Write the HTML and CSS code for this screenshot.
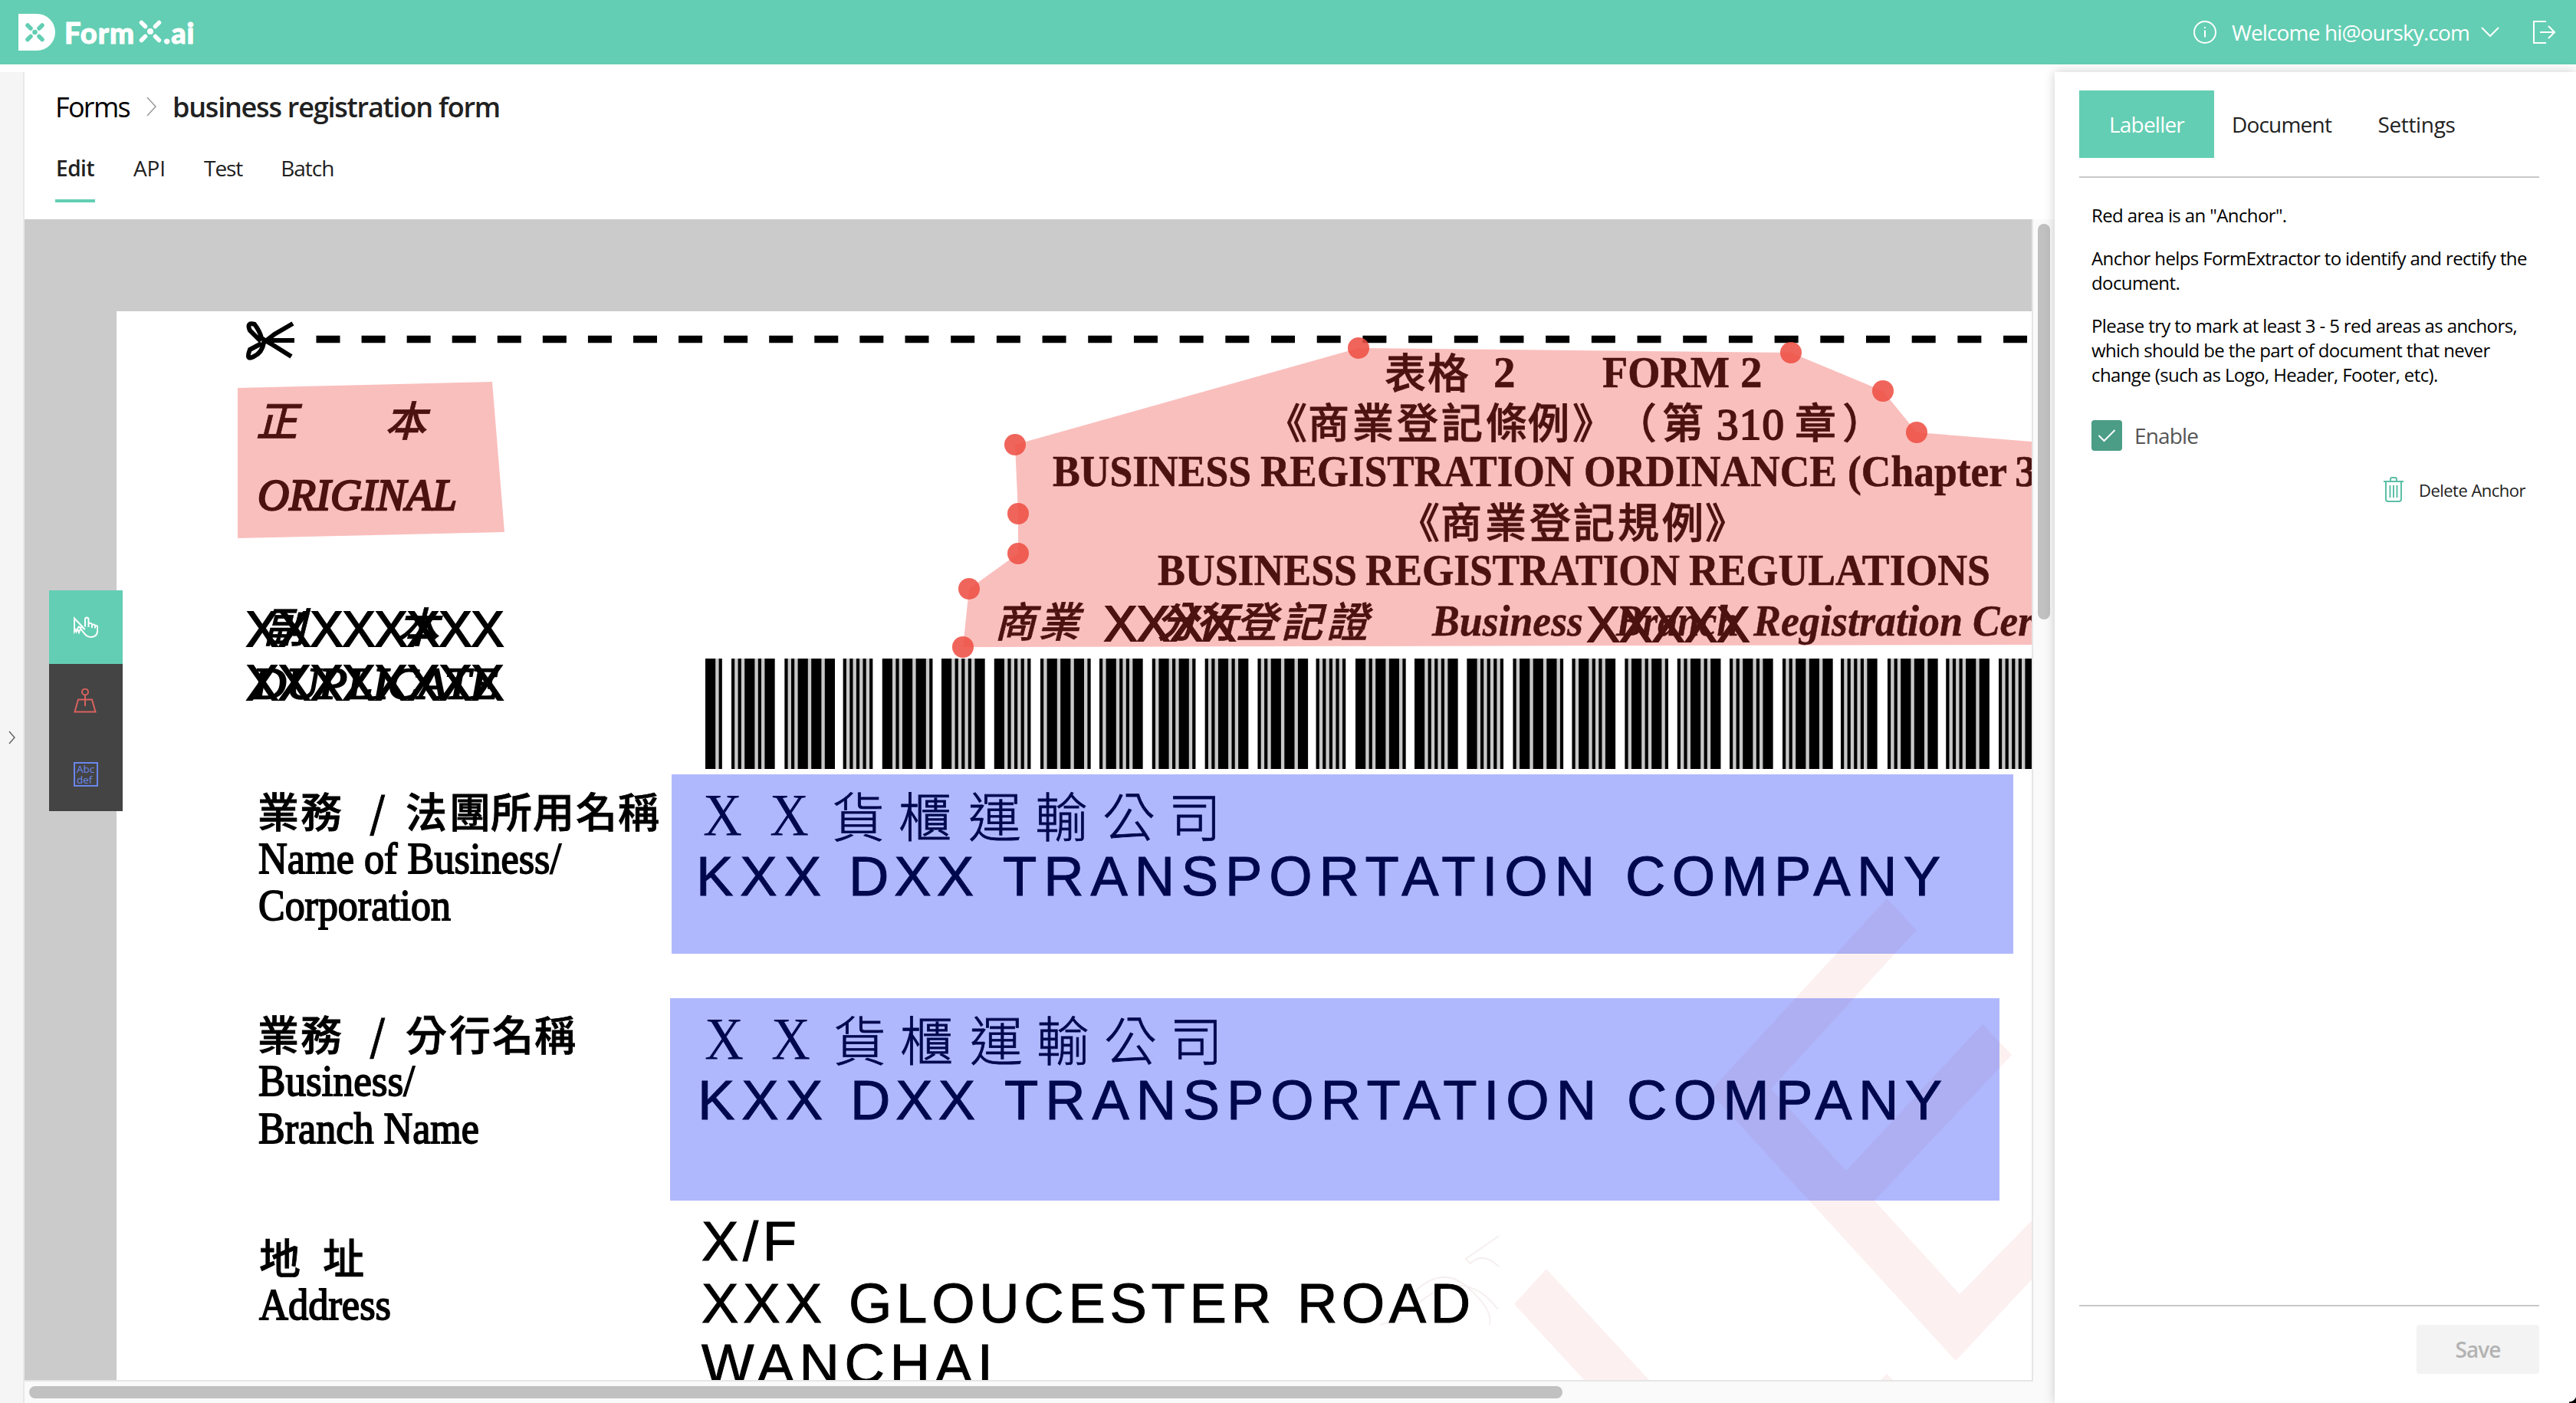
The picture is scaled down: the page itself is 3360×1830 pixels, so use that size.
FILE: index.html
```html
<!DOCTYPE html>
<html lang="en">
<head>
<meta charset="utf-8">
<title>FormX.ai</title>
<link rel="stylesheet" href="styles.css">
</head>
<body>
<header class="topbar">
  <div class="brand">
    <svg class="brand-mark" viewBox="0 0 48 48"><path d="M0 0H24A24 24 0 0 1 24 48H0Z" fill="#fff"/><g stroke="#63ceb3" stroke-width="5.500" stroke-linecap="round"><path d="M12 15l4 4M31 15l-4 4M12 33.500l4-4M31 33.500l-4-4"/></g><circle cx="21.500" cy="24" r="3.300" fill="#63ceb3"/></svg>
    <span class="brand-text">Form</span>
    <svg class="brand-x" viewBox="0 0 30 30"><g stroke="#fff" stroke-width="5.500" stroke-linecap="round"><path d="M3.500 3.500l5 5M26.500 3.500l-5 5M3.500 26.500l5-5M26.500 26.500l-5-5"/></g><circle cx="15" cy="15" r="4" fill="#fff"/></svg>
    <span class="brand-text brand-ai">.ai</span>
  </div>
  <div class="account">
    <svg class="i-info" viewBox="0 0 30 30"><circle cx="15" cy="15" r="14" /><path d="M15 12.500v9M15 8v2"/></svg>
    <span class="welcome">Welcome hi@oursky.com</span>
    <svg class="i-down" viewBox="0 0 24 14"><path d="M1 1l11 11L23 1"/></svg>
    <svg class="i-exit" viewBox="0 0 30 30"><path d="M17 1H1v28h16M9 15h19M20 7l8 8-8 8"/></svg>
  </div>
</header>
<div class="shell">
  <aside class="rail"><svg viewBox="0 0 10 18"><path d="M1 1l7 8-7 8"/></svg></aside>
  <main class="work">
    <div class="crumbs">
      <span class="crumb">Forms</span>
      <svg viewBox="0 0 14 26"><path d="M1 1l11 12L1 25"/></svg>
      <span class="crumb current">business registration form</span>
    </div>
    <nav class="tabs"><a class="tab active">Edit</a><a class="tab api">API</a><a class="tab">Test</a><a class="tab">Batch</a></nav>
    <div class="stage">
      <div class="canvas">
        <svg class="doc" viewBox="32 286 2618 1514">
          <rect x="152" y="406" width="2500" height="1400" fill="#fff"/>
          <g class="watermark">
            <path d="M2461 1172L2500 1213 2310 1420 2408 1527 2586 1336 2624 1376 2445 1566 2556 1688 2651 1591V1668L2551 1775 2230 1424Z"/>
            <path d="M2017 1655L1975 1701 2067 1801H2152ZM2461 1792l-9 9h18Z"/>
          </g>
          <g class="scribble"><path d="M1955 1612L1912 1642l6 6q16-16 37 4M1838 1692q40-44 75-14t30 50M1850 1700q60-50 104 8M1800 1728l28-8"/></g>
          <g class="scissors"><path d="M340 445L326 431Q321 420 332 423 339 432 341 441L356 450 380 465M341 448L326 456Q320 471 331 465 342 460 344 447L358 436 382 422" /><path d="M350 444h34" /></g>
          <path class="cut" d="M412.500 442.500H1170" stroke-dasharray="31 28.070"/>
          <path class="cut" d="M1180.500 442.500H2651" stroke-dasharray="31 28.690"/>
          <g class="cjk slant"><text transform="translate(334 569) skewX(-14)">正</text><text transform="translate(502 569) skewX(-14)">本</text></g>
          <text class="serif it" x="336" y="665" textLength="260" lengthAdjust="spacingAndGlyphs">ORIGINAL</text>
          <g class="cjk slant"><text transform="translate(344 838) skewX(-14)">副</text><text transform="translate(518 838) skewX(-14)">本</text></g>
          <text class="strike" x="321" y="843" textLength="336" lengthAdjust="spacingAndGlyphs">XXXXXXXX</text>
          <text class="serif it" x="330" y="911" textLength="320" lengthAdjust="spacingAndGlyphs">DUPLICATE</text>
          <text class="strike" x="321" y="913" textLength="336" lengthAdjust="spacingAndGlyphs">XXXXXXXX</text>
          <g id="barcode" class="barcode"></g>
          <g class="cjk">
            <text x="1806 1862" y="507">表格</text>
            <text x="1651 1706 1764 1822 1880 1938 1993 2051" y="572">《商業登記條例》</text>
            <text x="2107 2168" y="572">（第</text><text x="2341 2403" y="572">章）</text>
            <text x="1824 1879 1937 1995 2052 2110 2168 2224" y="702">《商業登記規例》</text>
          </g>
          <g class="serif b">
            <text x="1948" y="505">2</text>
            <text x="2090" y="505" textLength="166" lengthAdjust="spacingAndGlyphs">FORM</text><text x="2270" y="505">2</text>
            <text class="n" x="2239" y="573" textLength="88" lengthAdjust="spacing">310</text>
            <text x="1373" y="634" textLength="259" lengthAdjust="spacingAndGlyphs">BUSINESS</text>
            <text x="1644" y="634" textLength="409" lengthAdjust="spacingAndGlyphs">REGISTRATION</text>
            <text x="2066" y="634" textLength="330" lengthAdjust="spacingAndGlyphs">ORDINANCE</text>
            <text x="2410" y="634" textLength="208" lengthAdjust="spacingAndGlyphs">(Chapter</text>
            <text x="2628" y="634">3</text>
            <text x="1510" y="763" textLength="260" lengthAdjust="spacingAndGlyphs">BUSINESS</text>
            <text x="1781" y="763" textLength="410" lengthAdjust="spacingAndGlyphs">REGISTRATION</text>
            <text x="2203" y="763" textLength="393" lengthAdjust="spacingAndGlyphs">REGULATIONS</text>
          </g>
          <g class="cjk slant">
            <text transform="translate(1297 831) skewX(-14)" x="0 57">商業</text>
            <text transform="translate(1508 831) skewX(-14)" x="0 52 104 163 222">分行登記證</text>
          </g>
          <text class="strike" x="1440" y="836" textLength="172" lengthAdjust="spacingAndGlyphs">XXXX</text>
          <g class="serif it b">
            <text x="1868" y="829" textLength="197" lengthAdjust="spacingAndGlyphs">Business</text>
            <text x="2108" y="829" textLength="160" lengthAdjust="spacingAndGlyphs">Branch</text>
            <text x="2287" y="829" textLength="273" lengthAdjust="spacingAndGlyphs">Registration</text>
            <text x="2573" y="829" textLength="80" lengthAdjust="spacingAndGlyphs">Cer</text>
          </g>
          <text class="strike" x="2070" y="837" textLength="212" lengthAdjust="spacingAndGlyphs">XXXXX</text>
          <g class="cjk">
            <text x="336 392" y="1080">業務</text><text x="482" y="1080">/</text><text x="529 586 640 695 751 806" y="1080">法團所用名稱</text>
            <text x="336 392" y="1371">業務</text><text x="482" y="1371">/</text><text x="529 586 642 697" y="1371">分行名稱</text>
            <text x="338 421" y="1662">地址</text>
          </g>
          <g class="serif m">
            <text x="337" y="1139" textLength="395" lengthAdjust="spacingAndGlyphs">Name of Business/</text>
            <text x="337" y="1200" textLength="251" lengthAdjust="spacingAndGlyphs">Corporation</text>
            <text x="337" y="1429" textLength="204" lengthAdjust="spacingAndGlyphs">Business/</text>
            <text x="337" y="1491" textLength="288" lengthAdjust="spacingAndGlyphs">Branch Name</text>
            <text x="338" y="1721" textLength="172" lengthAdjust="spacingAndGlyphs">Address</text>
          </g>
          <g id="value">
            <text class="fine" x="917" y="1089" textLength="51" lengthAdjust="spacingAndGlyphs">X</text><text class="fine" x="1004" y="1089" textLength="51" lengthAdjust="spacingAndGlyphs">X</text>
            <text class="ming" x="1085 1172 1263 1350 1438 1524" y="1092">貨櫃運輸公司</text>
            <g class="sans">
              <text x="908" y="1168" textLength="163">KXX</text><text x="1107" y="1168" textLength="163">DXX</text>
              <text x="1308" y="1168" textLength="772">TRANSPORTATION</text><text x="2120" y="1168" textLength="411">COMPANY</text>
            </g>
          </g>
          <use href="#value" x="2" y="291.500"/>
          <g class="sans">
            <text x="915" y="1644" textLength="124">X/F</text>
            <text x="915" y="1725" textLength="157">XXX</text><text x="1107" y="1725" textLength="551">GLOUCESTER</text><text x="1692" y="1725" textLength="226">ROAD</text>
            <text x="915" y="1804" textLength="380">WANCHAI</text>
          </g>
          <g class="anchor-area">
            <path d="M310 506L642 498 658 694 310 702Z"/>
            <path d="M1256 844L1264 768 1328 722V670L1324 580 1772 454 2336 460 2456 510 2500 564 2651 576V841Z"/>
          </g>
          <g class="field-area"><rect x="876" y="1010" width="1750" height="234"/><rect x="874" y="1302" width="1734" height="264"/></g>
          <g class="handles"><circle cx="1256" cy="844" r="14"/><circle cx="1264" cy="768" r="14"/><circle cx="1328" cy="722" r="14"/><circle cx="1328" cy="670" r="14"/><circle cx="1324" cy="580" r="14"/><circle cx="1772" cy="454" r="14"/><circle cx="2336" cy="460" r="14"/><circle cx="2456" cy="510" r="14"/><circle cx="2500" cy="564" r="14"/></g>
        </svg>
      </div>
      <div class="vbar"><i></i></div>
      <div class="hbar"><i></i></div>
      <div class="tools">
        <button class="tool on"><svg viewBox="0 0 32 32"><path d="M9 17l-2-1.500L5 18l-1.500 4-1-2.500L1 22V4.500L13 17"/><path d="M5 18l2 5 1.500-4"/><path d="M15 15.500V6q0-2.500 2.200-2.500T19.500 6v6q0-1.500 2-1.200T24 12.500q4-.5 4 1.500 3-.5 3.200 1.500V20q0 8.500-8.200 9-6 0-9.500-5.500L9 18q-.5-2.500 2-2l4 3M19.500 12v4M24 12.500V17M28 14v3.500"/></svg></button>
        <button class="tool red"><svg viewBox="0 0 32 32"><circle cx="15" cy="4.500" r="4"/><path d="M15 9v14M6 14.500h18l4.500 16h-27z"/></svg></button>
        <button class="tool blue"><svg viewBox="0 0 32 32"><rect x="1" y="1" width="30" height="30"/><text x="4" y="14">Abc</text><text x="4" y="27.500">def</text></svg></button>
      </div>
    </div>
  </main>
  <section class="panel">
    <nav class="ptabs"><a class="ptab on">Labeller</a><a class="ptab">Document</a><a class="ptab last">Settings</a></nav>
    <div class="help">
      <p>Red area is an "Anchor".</p>
      <p>Anchor helps FormExtractor to identify and rectify the<br>document.</p>
      <p>Please try to mark at least 3 - 5 red areas as anchors,<br>which should be the part of document that never<br>change (such as Logo, Header, Footer, etc).</p>
    </div>
    <label class="check"><span class="box"><svg viewBox="0 0 24 18"><path d="M1.500 9l7 7L22.500 2"/></svg></span>Enable</label>
    <div class="delete"><svg viewBox="0 0 26 34"><path d="M0 6h26M3 6v23q0 3 3 3h14q3 0 3-3V6M9 5V3q0-2 2-2h4q2 0 2 2v2M8.500 11v16M13 11v16M17.500 11v16"/></svg>Delete Anchor</div>
    <footer class="pfoot"><button class="save">Save</button></footer>
  </section>
</div>
<i class="corner"></i>
<script src="barcode.js"></script>
</body>
</html>
```
FILE: styles.css
```css
*{box-sizing:border-box}
body{margin:0;position:relative;width:3360px;height:1830px;overflow:hidden;background:#fff;font-family:"Open Sans","Noto Sans",sans-serif;font-size:28px;color:#212121}
svg{display:block;fill:none}
button{border:0;font:inherit;padding:0;letter-spacing:inherit}
.topbar{height:84px;background:#63ceb3;display:flex;justify-content:space-between;color:#fff;padding:0 26px 0 24px}
.brand{display:flex;align-items:center}
.brand-mark{width:48px;height:48px}
.brand-text{font:900 38px/82px Lato,sans-serif;margin-left:12px;letter-spacing:1px;-webkit-text-stroke:1px #fff}
.brand-x{width:30px;height:30px;margin:0 0 2px 5px}
.brand-ai{margin-left:2px}
.account{display:flex;align-items:center;stroke:#fff;stroke-width:2}
.i-info{width:30px;height:30px;margin-right:20px}
.welcome{margin-right:15px;letter-spacing:-.87px}
.i-down{width:24px;height:14px;margin-right:44px}
.i-exit{width:30px;height:30px}
.shell{display:flex;height:1736px;margin-top:10px}
.rail{width:32px;background:#f5f5f5;border-right:2px solid #e8e8e8;display:flex;align-items:center;padding-left:11px}
.rail svg{width:10px;height:18px;stroke:#666;stroke-width:1.500}
.work{width:2648px;display:flex;flex-direction:column}
.crumbs{height:88px;display:flex;align-items:center;padding:2px 0 0 40px;font-size:36px;color:#000;letter-spacing:-1.690px}
.crumbs svg{width:14px;height:26px;margin:0 20px 0 22px;stroke:#999;stroke-width:1.500}
.current{font-weight:600;color:#212121;letter-spacing:-1.220px}
.tabs{height:104px;display:flex;align-items:flex-start;gap:50px;padding-left:40px;letter-spacing:-1.050px}
.tab{height:82px;line-height:75px}
.tab.active{width:52px;font-weight:600;letter-spacing:-.490px;padding-left:1px;border-bottom:4px solid #63ceb3}
.tab.api{letter-spacing:-.120px}
.stage{position:relative;flex:1;display:grid;grid-template-columns:2620px 28px;grid-template-rows:1516px 28px;background:#fafafa}
.canvas{background:#cbcbcb;border:solid #e6e6e6;border-width:0 2px 2px 0;overflow:hidden}
.doc{width:2618px;height:1514px;fill:#000}
.vbar{padding:6px 0 0 6px}
.vbar i{display:block;width:16px;height:516px;border-radius:8px;background:#c1c1c1}
.hbar{padding:6px 0 0 6px}
.hbar i{display:block;width:2000px;height:16px;border-radius:8px;background:#c1c1c1}
.tools{position:absolute;left:32px;top:484px;width:96px;background:#444}
.tool{display:flex;width:96px;height:96px;align-items:center;justify-content:center;background:none}
.tool svg{width:32px;height:32px;stroke-width:2;stroke:#fff}
.tool.on{background:#63ceb3}
.tool.red svg{stroke:#d9635f}
.tool.blue svg{stroke:#6a87ee}
.tool text{font-size:13.500px;stroke:none;fill:#6a87ee}
.watermark{fill:#fcf1f0}
.scribble{fill:none;stroke:#f6efef;stroke-width:2}
.scissors{fill:none;stroke:#000;stroke-width:6}
.cut{stroke:#000;stroke-width:9.500}
.cjk{font-family:"Noto Sans CJK TC",sans-serif;font-size:54px;font-weight:500;stroke:#000;stroke-width:.8}
.serif{font-family:"Liberation Serif",serif;font-size:57px}
.m{stroke:#000;stroke-width:1.800}
.it{font-style:italic;stroke:#000;stroke-width:2.400}
.b{font-weight:700;stroke:#000;stroke-width:.6}
.it.b{stroke-width:.5}
.n{font-weight:400;stroke-width:2}
.strike{font-family:"Liberation Sans",sans-serif;font-size:65px;stroke:#000;stroke-width:2.200}
.fine{font-family:"Liberation Serif",serif;font-size:78px}
.ming{font-family:"Noto Sans CJK TC",sans-serif;font-weight:300;font-size:69px;stroke:#000;stroke-width:.8}
.sans{font-family:"Liberation Sans",sans-serif;font-size:72.500px;stroke:#000;stroke-width:1}
.barcode .gap{fill:#c8c8c8}
.anchor-area{fill:rgba(235,55,50,.32)}
.field-area{fill:rgba(0,26,247,.31)}
.handles{fill:rgba(238,78,67,.87)}
.panel{position:relative;width:680px;background:#fff;box-shadow:0 0 14px rgba(0,0,0,.2);padding:24px 48px 0 32px;display:flex;flex-direction:column}
.ptabs{display:flex;height:114px;border-bottom:2px solid #c8c8c8;letter-spacing:-.8px}
.ptab{height:88px;line-height:88px;width:176px;text-align:center}
.ptab.on{background:#63ceb3;color:#fff}
.ptab.last{letter-spacing:-.350px}
.help{padding:33px 0 0 16px;font-size:24px;line-height:32px;color:#000;white-space:nowrap;letter-spacing:-.610px}
.help p{margin:0 0 24px}
.check{display:flex;align-items:center;gap:16px;margin:19px 0 0 16px;color:#555;letter-spacing:-.87px}
.box{width:40px;height:40px;border-radius:4px;background:#4b9d86;display:flex;align-items:center;justify-content:center}
.box svg{width:24px;height:18px;stroke:#fff;stroke-width:2}
.delete{display:flex;align-items:center;justify-content:flex-end;gap:20px;margin:34px 18px 0 0;font-size:22px;letter-spacing:-.520px}
.delete svg{width:26px;height:34px;stroke:#5cbfa6;stroke-width:2}
.pfoot{margin-top:auto;height:128px;border-top:2px solid #c8c8c8;display:flex;justify-content:flex-end;padding-top:24px}
.save{width:160px;height:64px;border-radius:4px;background:#f3f3f3;color:#b3b3b3;font-weight:600;letter-spacing:-.930px}
.corner{position:absolute;right:0;bottom:0;width:9px;height:11px;background:radial-gradient(circle at 0 0,transparent 9px,#000 10px)}
```
FILE: barcode.js
```js
// Bar groups: [left edge, bars], W = wide bar, n = narrow bar
var groups = [[920,"Wn"],[954,"nnWnW"],[1023.4,"nnWWW"],[1099.7,"nnnnn"],[1150.8,"WnWWn"],[1228,"WnnnW"],[1296.8,"Wnnnn"],[1357,"nWWWn"],[1434,"nWnnW"],[1502.8,"nWnWn"],[1571.7,"nnWnW"],[1640.5,"nnWWW"],[1716.6,"nnnnn"],[1768,"WnWWn"],[1845,"WnnnW"],[1913.4,"Wnnnn"],[1973.5,"nWWWn"],[2050.5,"nWnnW"],[2119.4,"nWnWn"],[2187.8,"nnWnW"],[2256,"nnWnW"],[2325,"nnWWW"],[2401,"nnnnW"],[2462,"nnWWW"],[2538.3,"nnnWW"],[2607,"nnnnW"]];
var out = "";
groups.forEach(function (g) {
  var x = g[0], bars = "";
  g[1].split("").forEach(function (c) {
    var w = c === "W" ? 13.2 : 4.2;
    bars += '<rect x="' + x + '" y="859" width="' + w + '" height="144"/>';
    x += w + 4.4;
  });
  out += '<rect class="gap" x="' + g[0] + '" y="859" width="' + (x - 4.4 - g[0]) + '" height="144"/>' + bars;
});
document.getElementById("barcode").innerHTML = out;
```
